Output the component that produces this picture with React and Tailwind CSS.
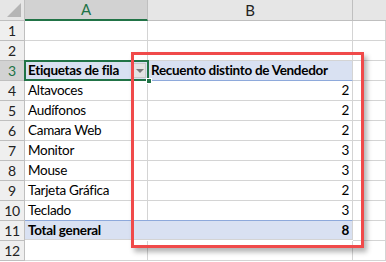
import React from 'react';

const rows = [
  { label: 'Altavoces', count: 2 },
  { label: 'Audífonos', count: 2 },
  { label: 'Camara Web', count: 2 },
  { label: 'Monitor', count: 3 },
  { label: 'Mouse', count: 3 },
  { label: 'Tarjeta Gráfica', count: 2 },
  { label: 'Teclado', count: 3 },
];

function RowHead({ n, active }) {
  return (
    <div
      className={
        'h-5 flex items-center justify-center border-b border-r border-[#bfbfbf] text-[14px] ' +
        (active ? 'bg-[#d2d2d2] text-[#217346]' : 'bg-[#efefef] text-[#222]')
      }
    >
      {n}
    </div>
  );
}

function Cell({ children, className = '' }) {
  return <div className={'h-5 border-b border-r border-[#d4d4d4] flex items-center whitespace-nowrap ' + className}>{children}</div>;
}

export default function App() {
  return (
    <div className="relative w-[386px] h-[262px] overflow-hidden bg-white text-black" style={{ fontFamily: 'Lato, "Open Sans", sans-serif' }}>
      <div className="grid grid-cols-[25px_123px_205px_33px] text-[13.5px] tracking-[-0.3px]">
        {/* column headers */}
        <div className="h-[21px] bg-[#e6e6e6] border-b border-r border-[#bfbfbf] relative">
          <div className="absolute right-[3px] bottom-[3px] w-0 h-0 border-l-[14px] border-l-transparent border-b-[14px] border-b-[#b5b5b5]" />
        </div>
        <div className="h-[21px] bg-[#d2d2d2] border-b-2 border-b-[#217346] border-r border-r-[#bfbfbf] flex items-center justify-center text-[15px] text-[#217346]">A</div>
        <div className="h-[21px] bg-[#e6e6e6] border-b border-r border-[#bfbfbf] flex items-center justify-center text-[15px] text-[#222]">B</div>
        <div className="h-[21px] bg-[#e6e6e6] border-b border-[#bfbfbf]" />

        {/* rows 1-2 */}
        {[1, 2].map((n) => (
          <React.Fragment key={n}>
            <RowHead n={n} />
            <Cell />
            <Cell />
            <Cell />
          </React.Fragment>
        ))}

        {/* pivot header */}
        <RowHead n={3} active />
        <div className="h-5 relative bg-[#d9e1f2] border-b border-[#8ea9db] flex items-center pl-[3px] font-bold whitespace-nowrap">
          Etiquetas de fila
          <div className="absolute right-[2px] top-[2px] w-[13px] h-[15px] bg-[#e3e3e3] border border-[#c8c8c8] flex items-center justify-center">
            <div className="w-0 h-0 border-l-[4px] border-r-[4px] border-t-[4px] border-l-transparent border-r-transparent border-t-[#7a7a7a]" />
          </div>
          <div className="absolute -left-px -top-px -right-px -bottom-px border-2 border-[#217346]" />
          <div className="absolute -right-[4px] -bottom-[4px] w-[6px] h-[6px] bg-[#217346] border border-white" />
        </div>
        <div className="h-5 bg-[#d9e1f2] border-b border-r border-b-[#8ea9db] border-r-[#d4d4d4] flex items-center pl-[3px] font-bold whitespace-nowrap">
          Recuento distinto de Vendedor
        </div>
        <Cell />

        {rows.map((r, i) => (
          <React.Fragment key={r.label}>
            <RowHead n={i + 4} />
            <Cell className="pl-[3px]">{r.label}</Cell>
            <Cell className="justify-end pr-[3px]">{r.count}</Cell>
            <Cell />
          </React.Fragment>
        ))}

        {/* grand total */}
        <RowHead n={11} />
        <div className="h-5 bg-[#d9e1f2] border-t border-[#8ea9db] border-b border-b-[#d4d4d4] -mt-px flex items-center pl-[3px] font-bold">Total general</div>
        <div className="h-5 bg-[#d9e1f2] border-t border-[#8ea9db] border-b border-r border-b-[#d4d4d4] border-r-[#d4d4d4] -mt-px flex items-center justify-end pr-[3px] font-bold">8</div>
        <Cell />

        <RowHead n={12} />
        <Cell />
        <Cell />
        <Cell />
      </div>

      {/* highlight frame */}
      <div className="absolute left-[131px] top-[52px] w-[233px] h-[196px] border-[3.5px] border-[#f04a4a] shadow-[3px_4px_5px_rgba(0,0,0,0.3)]" />
    </div>
  );
}
